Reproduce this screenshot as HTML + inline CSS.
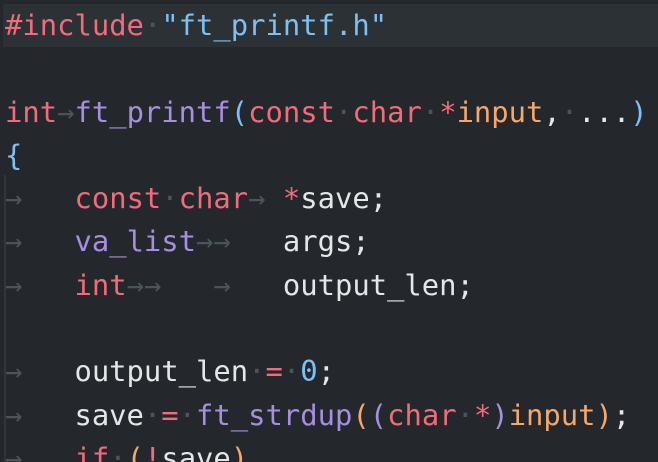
<!DOCTYPE html>
<html><head><meta charset="utf-8"><style>
html,body{margin:0;padding:0;background:#24282c;width:658px;height:462px;overflow:hidden}
.ed{position:relative;font-family:"DejaVu Sans Mono","Liberation Mono",monospace;font-size:28.85px;color:#e4e6e8;padding-top:4px}
.l{height:43.3px;line-height:43.3px;padding-left:5px;white-space:pre;position:relative}
.cur{position:absolute;left:3px;right:0;top:4px;height:43px;background:#2c3135}
.g{position:absolute;left:4px;top:175px;width:2px;height:300px;background:#30363b}
.k{color:#f26b7b}.b{color:#7cc0f4}.p{color:#a68ee0}.o{color:#f6a76a}.w{color:#e4e6e8}
.d{color:#4c545b}
.a{display:inline-block;width:1ch;color:#4c545b;text-align:center}
</style></head><body><div class="ed">
<div class="cur"></div><div class="g"></div>
<div class="l"><span class="k">#include</span><span class="d">·</span><span class="b">"ft_printf.h"</span></div>
<div class="l"> </div>
<div class="l"><span class="k">int</span><span class="a">→</span><span class="p">ft_printf</span><span class="b">(</span><span class="k">const</span><span class="d">·</span><span class="k">char</span><span class="d">·</span><span class="k">*</span><span class="o">input</span>,<span class="d">·</span>...<span class="b">)</span></div>
<div class="l"><span class="b">{</span></div>
<div class="l"><span class="a">→</span>   <span class="k">const</span><span class="d">·</span><span class="k">char</span><span class="a">→</span> <span class="k">*</span>save;</div>
<div class="l"><span class="a">→</span>   <span class="p">va_list</span><span class="a">→</span><span class="a">→</span>   args;</div>
<div class="l"><span class="a">→</span>   <span class="k">int</span><span class="a">→</span><span class="a">→</span>   <span class="a">→</span>   output_len;</div>
<div class="l"> </div>
<div class="l"><span class="a">→</span>   output_len<span class="d">·</span><span class="k">=</span><span class="d">·</span><span class="b">0</span>;</div>
<div class="l"><span class="a">→</span>   save<span class="d">·</span><span class="k">=</span><span class="d">·</span><span class="p">ft_strdup</span><span class="o">(</span><span class="p">(</span><span class="k">char</span><span class="d">·</span><span class="k">*</span><span class="p">)</span><span class="o">input)</span>;</div>
<div class="l"><span class="a">→</span>   <span class="k">if</span><span class="d">·</span><span class="o">(</span><span class="k">!</span>save<span class="o">)</span></div>
</div></body></html>
